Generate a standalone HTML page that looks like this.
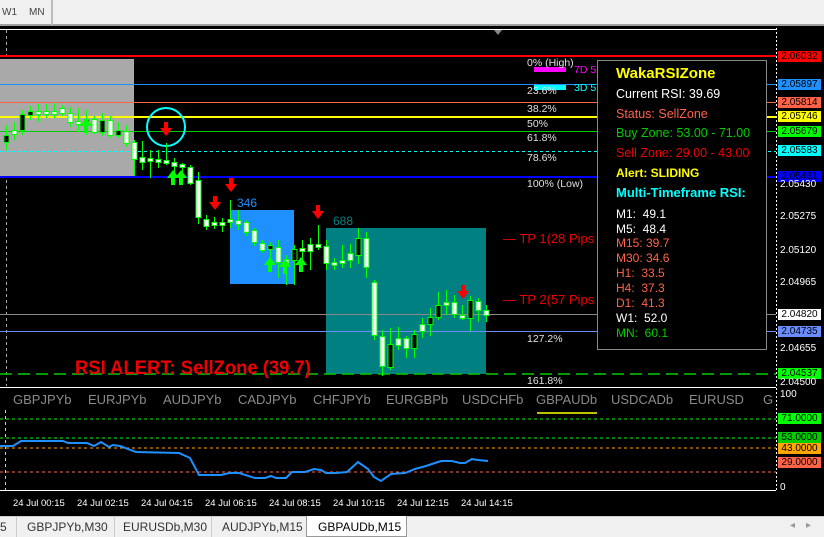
<!DOCTYPE html>
<html><head><meta charset="utf-8"><style>
*{margin:0;padding:0;box-sizing:border-box}
body{width:824px;height:537px;overflow:hidden;background:#000;font-family:"Liberation Sans",sans-serif;position:relative}
.a{position:absolute;white-space:nowrap}
.top{left:0;top:0;width:824px;height:26px;background:#f0f0f0;border-bottom:2px solid #a0a0a0}
.pl{position:absolute;left:778px;width:43px;height:11px;font-size:10px;line-height:11px;text-align:center;color:#000}
.pt{position:absolute;left:780px;font-size:10px;color:#fff;line-height:11px}
.fib{position:absolute;left:527px;font-size:10.5px;color:#e0e0e0;line-height:12px}
.sym{position:absolute;top:392px;font-size:13px;color:#8a8a8a}
.tm{position:absolute;top:498px;font-size:9.5px;color:#fff}
.panel{position:absolute;left:597px;top:60px;width:170px;height:290px;border:1px solid #888;background:#000}
.panel div{position:absolute;left:18px;white-space:nowrap;font-size:12.5px;line-height:14px}
.tabs{position:absolute;left:0;top:516px;width:824px;height:21px;background:#f0f0f0;border-top:1px solid #ccc;font-size:12px;color:#333}
.tabs span{position:absolute;top:3px}
</style></head><body>
<div class="a top"></div>
<div class="a" style="left:2px;top:7px;font-size:10px;color:#444">W1</div>
<div class="a" style="left:29px;top:7px;font-size:10px;color:#444">MN</div>
<div class="a" style="left:51px;top:0;width:2px;height:25px;background:#bbb"></div>

<svg class="a" style="left:0;top:0" width="824" height="537">
<line x1="0" y1="29.5" x2="776" y2="29.5" stroke="#fff"/>
<line x1="6.5" y1="30" x2="6.5" y2="386" stroke="#aaa" stroke-dasharray="3,3"/>
<line x1="776.5" y1="28" x2="776.5" y2="490" stroke="#fff" stroke-dasharray="2,2"/>
<rect x="0" y="59" width="134" height="117" fill="#a9a9a9"/>
<rect x="230" y="210" width="64" height="74" fill="#1e90ff"/>
<rect x="326" y="228" width="160" height="146" fill="#008080"/>
<line x1="0" y1="56" x2="776" y2="56" stroke="#f00" stroke-width="2"/>
<line x1="0" y1="84.5" x2="776" y2="84.5" stroke="#1e90ff"/>
<line x1="0" y1="102.5" x2="776" y2="102.5" stroke="#ff6347"/>
<line x1="0" y1="117" x2="776" y2="117" stroke="#ff0" stroke-width="2"/>
<line x1="0" y1="131.5" x2="776" y2="131.5" stroke="#0c0"/>
<line x1="0" y1="151.5" x2="776" y2="151.5" stroke="#0ff" stroke-dasharray="3,3"/>
<line x1="0" y1="177" x2="776" y2="177" stroke="#00f" stroke-width="2"/>
<line x1="0" y1="314.5" x2="776" y2="314.5" stroke="#888"/>
<line x1="0" y1="331.5" x2="776" y2="331.5" stroke="#6a8cff"/>
<line x1="0" y1="374" x2="776" y2="374" stroke="#0c0" stroke-width="1.5" stroke-dasharray="12,6"/>
<line x1="0" y1="387.5" x2="776" y2="387.5" stroke="#fff"/>
<rect x="534" y="67" width="32" height="5" fill="#f0f"/>
<rect x="534" y="85" width="32" height="5" fill="#0ff"/>
<circle cx="166" cy="127" r="19" fill="none" stroke="#0ff" stroke-width="2"/>
<g id="candles"></g>
<g id="arrows"></g>
<line x1="0" y1="490.5" x2="776" y2="490.5" stroke="#fff"/>
<line x1="5.5" y1="410" x2="5.5" y2="490" stroke="#ccc" stroke-dasharray="3,3"/>
<line x1="0" y1="419" x2="776" y2="419" stroke="#0f0" stroke-dasharray="3,3"/>
<line x1="0" y1="438" x2="776" y2="438" stroke="#0f0" stroke-dasharray="3,3"/>
<line x1="0" y1="448" x2="776" y2="448" stroke="#ffa500" stroke-dasharray="3,3"/>
<line x1="0" y1="472" x2="776" y2="472" stroke="#ff6347" stroke-dasharray="3,3"/>
<polyline fill="none" stroke="#1e90ff" stroke-width="2" points="0,446 13,446 21,441 63,441 68,443 87,443 94,446 101,442 109,447 113,445 120,446 136,452 179,453 190,458 199,475 221,475 229,473 239,473 255,478 265,478 271,476 276,478 286,478 292,472 305,472 314,469 321,470 326,473 336,473 347,472 358,462 368,469 374,477 381,481 391,474 405,473 415,469 426,466 435,463 441,461 452,461 460,463 465,463 472,459 478,460 488,461"/>
<line x1="537" y1="413" x2="597" y2="413" stroke="#ff0" stroke-width="1.5"/>
<polygon points="494,30 502,30 498,35" fill="#888"/>
</svg>

<div class="pl" style="top:51px;background:#f00">2.06032</div>
<div class="pl" style="top:79px;background:#1e90ff">2.05897</div>
<div class="pl" style="top:97px;background:#ff6347">2.05814</div>
<div class="pl" style="top:111px;background:#ff0">2.05746</div>
<div class="pl" style="top:126px;background:#0f0">2.05679</div>
<div class="pl" style="top:145px;background:#0ff">2.05583</div>
<div class="pl" style="top:171px;background:#00f">2.05461</div>
<div class="pt" style="top:179px">2.05430</div>
<div class="pt" style="top:211px">2.05275</div>
<div class="pt" style="top:245px">2.05120</div>
<div class="pt" style="top:277px">2.04965</div>
<div class="pl" style="top:309px;background:#fff">2.04820</div>
<div class="pl" style="top:326px;background:#6a8cff">2.04735</div>
<div class="pt" style="top:343px">2.04655</div>
<div class="pl" style="top:368px;background:#0f0">2.04537</div>
<div class="pt" style="top:377px">2.04500</div>

<div class="fib" style="top:57px">0% (High)</div>
<div class="a" style="left:574px;top:64px;font-size:10.5px;color:#f0f">7D 5</div>
<div class="fib" style="top:85px">23.6%</div>
<div class="a" style="left:574px;top:82px;font-size:10.5px;color:#0ff">3D 5</div>
<div class="fib" style="top:103px">38.2%</div>
<div class="fib" style="top:118px">50%</div>
<div class="fib" style="top:132px">61.8%</div>
<div class="fib" style="top:152px">78.6%</div>
<div class="fib" style="top:178px">100% (Low)</div>
<div class="fib" style="top:333px">127.2%</div>
<div class="fib" style="top:375px">161.8%</div>
<div class="a" style="left:503px;top:231px;font-size:13px;color:#e00">— TP 1(28 Pips</div>
<div class="a" style="left:503px;top:292px;font-size:13px;color:#e00">— TP 2(57 Pips</div>
<div class="a" style="left:237px;top:196px;font-size:12px;color:#1e90ff">346</div>
<div class="a" style="left:333px;top:214px;font-size:12px;color:#008080">688</div>
<div class="a" style="left:75px;top:358px;font-size:19px;font-weight:bold;color:#e00;transform:scaleX(0.97);transform-origin:left">RSI ALERT: SellZone (39.7)</div>

<div class="panel">
<div style="top:6px;font-size:15px;font-weight:bold;color:#ff0">WakaRSIZone</div>
<div style="top:26px;color:#fff">Current RSI: 39.69</div>
<div style="top:46px;color:#ff6347">Status: SellZone</div>
<div style="top:65px;color:#0c0">Buy Zone: 53.00 - 71.00</div>
<div style="top:85px;color:#e00">Sell Zone: 29.00 - 43.00</div>
<div style="top:105px;font-weight:bold;color:#ff0;font-size:12px">Alert: SLIDING</div>
<div style="top:125px;font-weight:bold;color:#0ff;font-size:13px">Multi-Timeframe RSI:</div>
<div style="top:146px;color:#fff;font-size:12px">M1:&nbsp; 49.1</div>
<div style="top:161px;color:#fff;font-size:12px">M5:&nbsp; 48.4</div>
<div style="top:175px;color:#ff6347;font-size:12px">M15: 39.7</div>
<div style="top:190px;color:#ff6347;font-size:12px">M30: 34.6</div>
<div style="top:205px;color:#ff6347;font-size:12px">H1:&nbsp; 33.5</div>
<div style="top:220px;color:#ff6347;font-size:12px">H4:&nbsp; 37.3</div>
<div style="top:235px;color:#ff6347;font-size:12px">D1:&nbsp; 41.3</div>
<div style="top:250px;color:#fff;font-size:12px">W1:&nbsp; 52.0</div>
<div style="top:265px;color:#0c0;font-size:12px">MN:&nbsp; 60.1</div>
</div>

<div class="sym" style="left:13px">GBPJPYb</div>
<div class="sym" style="left:88px">EURJPYb</div>
<div class="sym" style="left:163px">AUDJPYb</div>
<div class="sym" style="left:238px">CADJPYb</div>
<div class="sym" style="left:313px">CHFJPYb</div>
<div class="sym" style="left:386px">EURGBPb</div>
<div class="sym" style="left:462px">USDCHFb</div>
<div class="sym" style="left:536px">GBPAUDb</div>
<div class="sym" style="left:611px">USDCADb</div>
<div class="sym" style="left:689px">EURUSD</div>
<div class="sym" style="left:763px">G</div>

<div class="pt" style="top:389px">100</div>
<div class="pl" style="top:413px;background:#0f0">71.0000</div>
<div class="pl" style="top:432px;background:#0c0">53.0000</div>
<div class="pl" style="top:443px;background:#ffa500">43.0000</div>
<div class="pl" style="top:457px;background:#ff6347">29.0000</div>
<div class="pt" style="top:482px">0</div>

<div class="tm" style="left:13px">24 Jul 00:15</div>
<div class="tm" style="left:77px">24 Jul 02:15</div>
<div class="tm" style="left:141px">24 Jul 04:15</div>
<div class="tm" style="left:205px">24 Jul 06:15</div>
<div class="tm" style="left:269px">24 Jul 08:15</div>
<div class="tm" style="left:333px">24 Jul 10:15</div>
<div class="tm" style="left:397px">24 Jul 12:15</div>
<div class="tm" style="left:461px">24 Jul 14:15</div>

<div class="tabs">
<span style="left:0">5</span>
<span style="left:16px;top:0;width:1px;height:20px;background:#ccc"></span>
<span style="left:27px">GBPJPYb,M30</span>
<span style="left:114px;top:0;width:1px;height:20px;background:#ccc"></span>
<span style="left:123px">EURUSDb,M30</span>
<span style="left:211px;top:0;width:1px;height:20px;background:#ccc"></span>
<span style="left:222px">AUDJPYb,M15</span>
<span style="left:306px;top:-1px;width:101px;height:21px;background:#fff;border:1px solid #999;border-top:none"></span>
<span style="left:318px;color:#000">GBPAUDb,M15</span>
<span style="left:790px;color:#999;font-size:10px">◂</span>
<span style="left:806px;color:#999;font-size:10px">▸</span>
</div>

<script>
var C=[[6,135,142,125,150,0],[14,130,134,122,140,1],[22,114,130,110,135,0],[30,111,115,106,120,0],[38,111,113,104,122,1],[46,111,113,104,118,1],[54,111,113,103,118,1],[62,108,113,105,116,1],[70,113,122,107,127,1],[78,121,123,108,132,1],[86,119,121,110,135,0],[94,119,132,116,134,1],[102,120,132,113,136,0],[110,120,135,116,138,1],[118,130,135,122,138,0],[126,131,143,125,147,1],[134,142,159,140,176,1],[142,157,162,141,170,1],[150,158,161,150,178,1],[158,159,161,150,168,1],[166,160,162,143,165,1],[174,162,166,158,176,1],[182,164,166,163,178,1],[190,167,183,165,185,1],[198,180,217,172,224,1],[206,219,226,215,230,1],[214,222,224,217,229,1],[222,222,225,218,232,1],[230,219,222,200,228,1],[238,220,224,210,230,1],[246,222,232,220,236,1],[254,230,242,228,246,1],[262,243,250,240,253,1],[270,245,249,242,270,0],[278,247,262,240,278,1],[286,259,263,255,285,1],[294,249,260,245,285,0],[302,248,251,240,270,1],[310,244,251,238,270,1],[318,244,247,225,250,1],[326,246,263,240,270,1],[334,262,265,258,270,1],[342,260,262,245,268,1],[350,253,260,244,268,1],[358,238,255,228,264,0],[366,238,267,232,278,1],[374,282,335,280,340,1],[382,336,366,330,376,1],[390,344,367,328,370,0],[398,338,345,327,350,1],[406,338,348,336,358,1],[414,334,348,330,358,0],[422,324,331,318,338,1],[430,317,324,308,336,0],[438,305,317,292,320,0],[446,302,305,290,315,1],[454,302,314,295,318,1],[462,315,317,305,320,1],[470,300,318,296,331,0],[478,301,310,298,322,1],[486,310,315,305,322,1]];
var s='';C.forEach(function(c){s+='<line x1="'+(c[0]+0.5)+'" y1="'+c[3]+'" x2="'+(c[0]+0.5)+'" y2="'+c[4]+'" stroke="#0f0" stroke-width="1"/>';var h=Math.max(c[2]-c[1],3);s+='<rect x="'+(c[0]-2)+'" y="'+(c[1]+0.5)+'" width="5" height="'+h+'" fill="'+(c[5]?'#fff':'#000')+'" stroke="#0f0" stroke-width="1"/>';});
document.getElementById('candles').innerHTML=s;
var a='';
[[166,130],[215,204],[231,186],[318,213],[463,293]].forEach(function(p){a+='<path d="M'+(p[0]-2)+' '+(p[1]-8)+'h4v6h4l-6 8-6-8h4z" fill="#f00"/>';});
[[86,126],[173,178],[181,178],[270,265],[285,267],[301,265]].forEach(function(p){a+='<path d="M'+p[0]+' '+(p[1]-8)+'l6 8h-4v7h-4v-7h-4z" fill="#0f0"/>';});
document.getElementById('arrows').innerHTML=a;
</script>
</body></html>
